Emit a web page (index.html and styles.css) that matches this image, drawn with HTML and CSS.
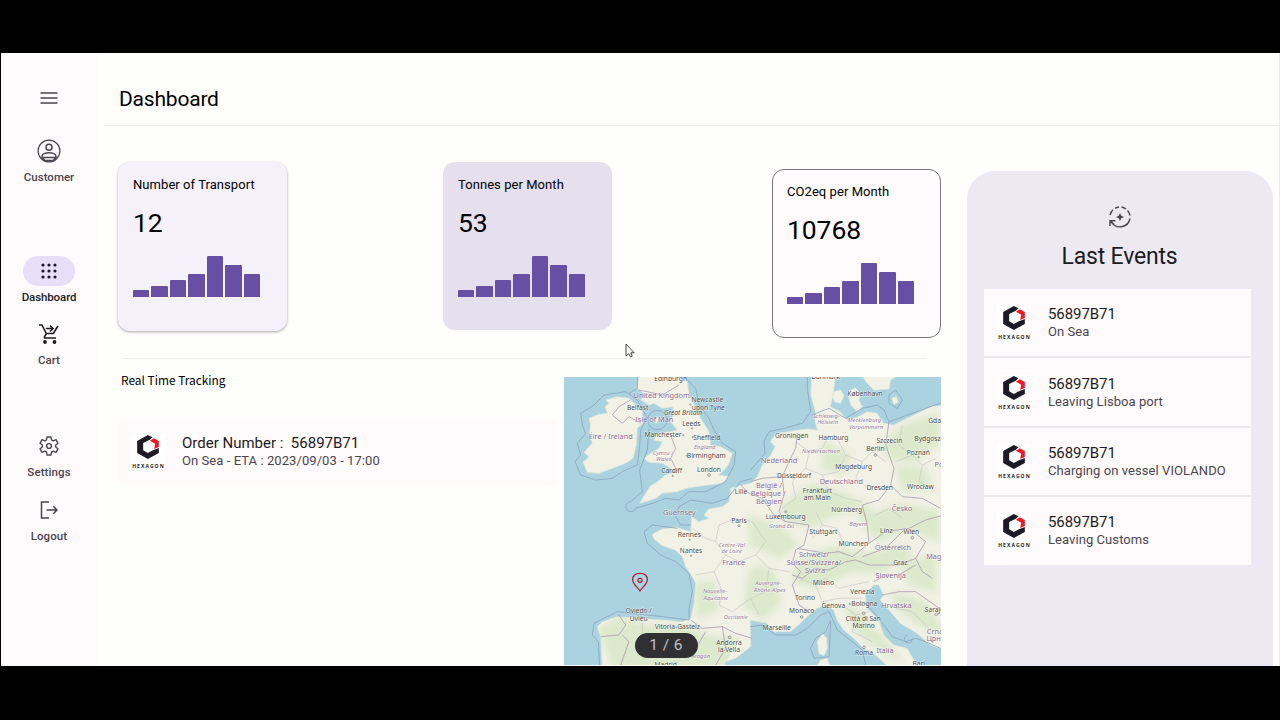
FILE: index.html
```html
<!DOCTYPE html>
<html lang="en">
<head>
<meta charset="utf-8">
<title>Dashboard</title>
<link rel="stylesheet" href="styles.css">
</head>
<body>
<svg class="defs" width="0" height="0" aria-hidden="true">
  <symbol id="hexagon" viewBox="0 0 65 72">
    <path fill="#1c1b25" d="M32 0 46 7 38 14 18 24V46L32 54 47 46 65 39V54L32 72 0 54V18Z"/>
    <path fill="#ed1c24" d="M50 10 65 18V36L51 42 54 26 38 17Z"/>
  </symbol>
  <symbol id="bars" viewBox="0 0 128 42">
    <g fill="#6750a4">
      <path d="M0 42v-6q0-1 1-1h14q1 0 1 1v6ZM18 42v-10q0-1 1-1h15q1 0 1 1v10ZM37 42v-16q0-1 1-1h14q1 0 1 1v16ZM55 42v-22q0-1 1-1h15q1 0 1 1v22ZM74 42v-40q0-1 1-1h14q1 0 1 1v40ZM92 42v-31q0-1 1-1h15q1 0 1 1v31ZM111 42v-22q0-1 1-1h14q1 0 1 1v22Z"/>
    </g>
  </symbol>
</svg>
<div class="app">
  <nav class="rail">
    <div class="menu"><svg width="18" height="12" viewBox="0 0 18 12"><path d="M.5 1h17M.5 6h17M.5 11h17" stroke="#49454f" stroke-width="1.7"/></svg></div>
    <div class="item"><span class="icon"><svg width="24" height="24" viewBox="0 0 24 24" fill="none" stroke="#49454f" stroke-width="1.2"><circle cx="12" cy="12" r="10.9"/><circle cx="12" cy="8.200" r="3" stroke-width="1.5"/><path d="M5 18.500v-1.500c0-2 3.500-3.300 7-3.300s7 1.300 7 3.300v1.500ZM5 18.500l3 3h8l3-3" stroke-width="1.5"/></svg></span><span class="label">Customer</span></div>
    <div class="item active"><span class="icon"><svg width="18" height="18" viewBox="0 0 18 18" fill="#1d192b"><circle cx="3" cy="3" r="1.6"/><circle cx="9" cy="3" r="1.6"/><circle cx="15" cy="3" r="1.6"/><circle cx="3" cy="9" r="1.6"/><circle cx="9" cy="9" r="1.6"/><circle cx="15" cy="9" r="1.6"/><circle cx="3" cy="15" r="1.6"/><circle cx="9" cy="15" r="1.6"/><circle cx="15" cy="15" r="1.6"/></svg></span><span class="label">Dashboard</span></div>
    <div class="item"><span class="icon"><svg width="20" height="20" viewBox="0 0 20 20" fill="none" stroke="#1c1b1f" stroke-width="1.6"><path d="M0 1h3l4.300 8.500h7L19 2M7.300 9.500 5.500 12.800q-.5 1.200.8 1.200H17M7 4.500h6.500M11 1.500l3 3-3 3"/><g fill="#1c1b1f" stroke="none"><circle cx="6" cy="18" r="1.900"/><circle cx="15.500" cy="18" r="1.900"/></g></svg></span><span class="label">Cart</span></div>
    <div class="item settings"><span class="icon"><svg width="20" height="20" viewBox="0 0 20 20" fill="none" stroke="#49454f" stroke-width="1.400"><path stroke-linejoin="round" d="M8 1h4l.5 2.800 1.700 1L17 3.700l2 3.600L16.700 9v2l2.300 1.700-2 3.600-2.800-1.100-1.700 1L12 19H8l-.5-2.800-1.700-1L3 16.300l-2-3.600L3.300 11V9L1 7.300l2-3.600 2.800 1.100 1.700-1Z"/><circle cx="10" cy="10" r="2.400"/></svg></span><span class="label">Settings</span></div>
    <div class="item"><span class="icon"><svg width="18" height="18" viewBox="0 0 18 18" fill="none" stroke="#49454f" stroke-width="1.500"><path d="M9 1H1.500v16H9M6.500 9H17M13.300 5.200 17 9l-3.700 3.800"/></svg></span><span class="label">Logout</span></div>
  </nav>
  <main class="main">
    <header class="header">Dashboard</header>
    <div class="content">
      <div class="left">
        <section class="cards">
          <article class="card elevated"><h3>Number of Transport</h3><strong>12</strong><svg width="128" height="42"><use href="#bars"/></svg></article>
          <article class="card filled"><h3>Tonnes per Month</h3><strong>53</strong><svg width="128" height="42"><use href="#bars"/></svg></article>
          <article class="card outlined"><h3>CO2eq per Month</h3><strong>10768</strong><svg width="128" height="42"><use href="#bars"/></svg></article>
        </section>
        <section class="tracking">
          <div class="orders">
            <h2>Real Time Tracking</h2>
            <div class="row order"><span class="logo"><svg width="22" height="24"><use href="#hexagon"/></svg><b>HEXAGON</b></span><div><p class="title">Order Number :&nbsp; 56897B71</p><p class="sub">On Sea - ETA : 2023/09/03 - 17:00</p></div></div>
          </div>
          <div class="map">
            <svg width="377" height="288" viewBox="5 6 1131 864" preserveAspectRatio="none">
              <rect x="0" y="0" width="1140" height="875" fill="#aad3df"/>
              <g fill="#f1f1e5" stroke="#dfe5d8" stroke-width="2">
                <path d="M130 75 165 65 200 70 215 85 240 110 240 145 225 160 222 210 212 250 190 265 150 280 110 295 75 292 62 262 80 245 65 232 90 205 80 180 85 150 80 130 110 118 135 115 128 95 140 85Z"/>
                <path d="M230 0 225 40 250 60 235 75 262 90 275 85 300 100 330 95 335 110 325 140 345 165 325 170 285 175 275 195 300 200 290 220 265 235 245 250 260 262 300 265 325 280 345 290 310 300 285 320 262 335 232 385 250 380 280 370 300 355 345 350 370 340 400 335 440 330 480 325 500 305 470 300 498 270 510 235 475 215 445 210 440 170 415 130 395 90 380 60 375 20 355 0Z"/>
                <path d="M748 0 745 60 755 95 760 115 758 140 765 165 735 162 700 166 670 172 640 175 625 200 638 215 625 240 600 270 585 305 565 325 540 330 505 340 500 380 480 395 440 402 425 420 440 430 410 440 388 425 385 470 340 457 300 462 270 478 275 492 300 512 340 526 360 545 370 575 390 605 400 625 395 685 385 730 360 740 300 735 230 730 165 725 120 740 105 755 115 785 120 880H480L490 860 520 850 565 815 564 735 614 745 634 770 684 770 714 745 734 725 764 700 794 690 814 705 824 735 844 765 874 790 904 820 939 840 984 880H1070L1034 820 994 810 964 780 949 735 914 700 909 660 934 630 949 630 964 660 954 675 984 710 1014 745 1064 775 1104 810 1145 825V90L1104 96 1044 125 994 150 964 145 944 115 914 110 884 127 854 135 834 110 804 95 812 60 820 0Z"/>
                <path d="M815 50 835 45 845 62 835 85 818 82 810 65ZM855 50 880 38 895 60 890 75 900 95 885 110 865 90ZM900 0 1010 0 985 15 980 42 935 46 910 20ZM988 70 1002 65 1008 82 995 88ZM765 800 780 775 793 790 795 820 785 842 770 835ZM760 880 775 855 795 850 805 880ZM275 138 287 125 292 132 282 145Z"/>
              </g>
              <clipPath id="land"><path d="M270 478 385 470 440 402 505 340 625 240 640 175 765 165 748 0H820L834 110 884 127 964 145 1145 90V825L1014 745 934 630 909 660 949 735 1050 880H984L844 765 794 690 684 770 564 735 480 880H120L105 755 165 725 385 730 400 625 340 526Z"/></clipPath>
              <g clip-path="url(#land)">
                <g class="terrain">
                  <path d="M560 585q40-30 80 10l15 90-55 50-55-40ZM650 395l100-70 100 30 55 40-70 20-90 40-65-10ZM950 210l70-60 110-35v90l-80 60-70-15ZM880 370l60 40 80-25 110 25v90l-90-35-90 35-55-60ZM700 560l100-45 120 20 110-30 20 40-100 50-80-5-110 50-70-15ZM840 690l55 20 70 80 60 70-60-20-80-65ZM990 650l100 30 60 100-70-20-80-60ZM110 755l60-30 90 25 120 0 50 30 100 10 30 35-80 55H150ZM400 620l60 0 5 90-60 20ZM780 200l90 40-30 60-60-20ZM560 420l90 30 60 60-60 40-90-40ZM1000 270l90 10 20 60-90 10ZM1010 560l110-20v110l-80-20Z"/>
                </g>
              </g>
              <g class="borders">
                <path d="M125 60 95 90 55 115 60 150 70 175 45 205 55 240 38 260 55 300 100 315 150 310 180 290 225 270 232 215 235 165 255 130 225 75 190 50Z"/>
                <circle cx="285" cy="135" r="29"/>
                <path d="M225 0V40L200 55M360 0 400 40 410 90 440 130 455 165 480 205 520 230 515 270 490 320 430 350 380 350 350 375 310 370 270 385 220 400A15 15 0 1 1 205 380L240 350 232 285 255 225 260 160M570 310 535 320 495 370 450 385 385 375 350 395 340 425 355 450 385 450"/>
                <path d="M735 0V40L745 110 720 145 665 160 620 170 605 200 608 235 565 285M748 120 800 100 850 130 900 100 945 90 965 105 980 140 1050 115 1145 80M980 60 1000 45 1020 75 1005 100 980 85ZM345 460 270 450 245 470 255 505 295 540 340 560 380 595 390 650 380 700V735L300 725 165 710 95 745 90 780 108 800 112 870M564 755 600 750 640 780 700 780 735 760 775 720 800 710 825 765 870 800 900 825 910 870M905 680 950 730 990 785 1030 800 1060 790 1090 800 1145 825M805 735 790 770 760 790 745 820 755 850 800 845 805 740M1035 780a12 12 0 1 0 15 12"/>
                <path class="land-border" d="M150 120 170 95 205 75M150 120 180 145 200 125 235 145M325 180 340 220 325 250 345 290M230 45 300 60 350 30M535 330 560 355 600 370 635 420 670 440 740 450 725 510 700 525 690 565 715 590 690 630 710 690 740 710M565 320 600 310 660 305 680 260 700 220 705 175M660 305 665 360 650 410 670 440M705 520 790 535 830 530 870 545 920 505 915 450 900 390 950 375 985 330 995 280 970 210 980 140M985 330 1020 365 1080 370 1135 400M920 505 970 470 1040 460 1090 500 1060 550 1010 570 920 570 880 555 850 560 800 585 760 580 720 610 690 600M900 545 970 520 1030 460M1040 460 1090 435 1145 420M1060 550 1080 590 1110 610M935 620 970 600 1010 600 1060 570M960 660 1010 650 1060 650 1145 710M170 720 190 750 170 780 115 785M180 780 200 800 175 870M385 735 420 760 480 755 520 775 570 790M430 770 400 820 350 850M480 755 490 820 460 870"/>
                <path class="region" d="M390 460 430 490 460 500 490 540 455 590 400 600M455 590 480 650 470 690 510 710 565 670M490 540 530 560 580 540 610 500 570 440 520 430 470 450 460 500M580 540 620 580 610 650 565 670 590 720M620 580 680 590M700 200 740 230 780 220 800 180M740 230 730 280 780 300 830 290 850 240 820 180M780 300 800 350 850 370 900 380M730 280 690 320 700 370 660 400M850 240 900 260 930 230 970 260M900 260 880 310 930 350M760 410 780 450 825 460 840 500 820 530M780 450 750 490M1000 260 1050 240 1080 270 1120 250M1020 150 1010 210 1050 240M1080 270 1070 320 1120 350M940 420 980 400 1020 430M710 610 760 630 790 610 830 640 870 630 920 620M760 630 780 680 830 670 900 670M840 690 880 720 870 770 930 800M880 720 920 710M1000 700 1050 710 1100 760M240 740V780L300 790 330 850"/>
              </g>
              <g class="labels">
                <g class="city">
                  <text x="325" y="19">Edinburgh</text><text x="226" y="104">Belfast</text><text x="435" y="82">Newcastle</text><text x="438" y="104">upon Tyne</text><text x="387" y="154">Leeds</text><text x="302" y="187">Manchester</text><text x="434" y="194">Sheffield</text><text x="432" y="248">Birmingham</text><text x="328" y="295">Cardiff</text><text x="440" y="290">London</text><text x="536" y="356">Lille</text><text x="530" y="443">Paris</text>
                  <text x="381" y="486">Rennes</text><text x="386" y="535">Nantes</text><text x="229" y="714">Oviedo /</text><text x="229" y="737">Uviéu</text><text x="345" y="762">Vitoria-Gasteiz</text><text x="500" y="810">Andorra</text><text x="500" y="832">la Vella</text><text x="310" y="877">Madrid</text>
                  <text x="790" y="12">Danmark</text><text x="908" y="63">København</text><text x="688" y="189">Groningen</text><text x="813" y="196">Hamburg</text><text x="981" y="204">Szczecin</text><text x="939" y="229">Berlin</text><text x="1105" y="197">Bydgoszcz</text><text x="1133" y="145">Gdańsk</text><text x="1068" y="239">Poznań</text><text x="874" y="283">Magdeburg</text><text x="695" y="309">Düsseldorf</text><text x="765" y="353">Frankfurt</text><text x="765" y="374">am Main</text><text x="952" y="346">Dresden</text><text x="1074" y="342">Wrocław</text><text x="853" y="412">Nürnberg</text><text x="670" y="433">Luxembourg</text>
                  <text x="783" y="476">Stuttgart</text><text x="873" y="512">München</text><text x="972" y="474">Linz</text><text x="1047" y="478">Wien</text><text x="1014" y="570">Graz</text><text x="783" y="629">Milano</text><text x="900" y="656">Venezia</text><text x="728" y="675">Torino</text><text x="813" y="698">Genova</text><text x="906" y="693">Bologna</text><text x="718" y="715">Monaco</text><text x="643" y="766">Marseille</text><text x="903" y="738">Città di San</text><text x="904" y="760">Marino</text><text x="905" y="840">Roma</text><text x="1127" y="710">Sarajevo</text><text x="1069" y="872">Bari</text>
                  <text x="362" y="121" font-style="italic">Great Britain</text>
                </g>
                <g class="country">
                  <text x="298" y="68">United Kingdom</text><text x="145" y="193">Éire / Ireland</text><text x="276" y="142">Isle of Man</text><text x="351" y="419">Guernsey</text><text x="514" y="570">France</text><text x="650" y="263">Nederland</text><text x="620" y="340">België /</text><text x="618" y="364">Belgique /</text><text x="620" y="388">Belgien</text><text x="837" y="326">Deutschland</text><text x="1019" y="407">Česko</text><text x="1150" y="275">Polska</text><text x="992" y="525">Österreich</text><text x="755" y="547">Schweiz/</text><text x="755" y="570">Suisse/Svizzera/</text><text x="758" y="595">Svizra</text><text x="1140" y="553">Magyaro.</text><text x="985" y="608">Slovenija</text><text x="1002" y="700">Hrvatska</text><text x="968" y="834">Italia</text><text x="1118" y="776">Crna</text><text x="1120" y="799">Црна</text>
                </g>
                <g class="province">
                  <text x="427" y="221">England</text><text x="302" y="240">Cymru /</text><text x="304" y="257">Wales</text><text x="792" y="130">Schleswig-</text><text x="796" y="148">Holstein</text><text x="909" y="142">Mecklenburg-</text><text x="911" y="161">Vorpommern</text><text x="776" y="235">Niedersachsen</text><text x="658" y="460">Grand Est</text><text x="888" y="453">Bayern</text><text x="508" y="515">Centre-Val</text><text x="508" y="533">de Loire</text><text x="458" y="655">Nouvelle-</text><text x="460" y="674">Aquitaine</text><text x="520" y="732">Occitanie</text><text x="618" y="631">Auvergne-</text><text x="622" y="651">Rhône-Alpes</text><text x="415" y="848">Aragón</text>
                </g>
              </g>
              <g fill="none" stroke="#7a7a78" stroke-width="2"><circle cx="384" cy="88" r="2"/><circle cx="389" cy="160" r="2"/><circle cx="363" cy="181" r="2"/><circle cx="391" cy="186" r="2"/><circle cx="374" cy="242" r="2"/><circle cx="331" cy="303" r="2"/><circle cx="440" cy="300" r="4"/><circle cx="530" cy="452" r="3"/><circle cx="939" cy="240" r="4"/><circle cx="1069" cy="246" r="2"/><circle cx="670" cy="410" r="3"/><circle cx="386" cy="542" r="2"/><circle cx="382" cy="494" r="2"/><circle cx="502" cy="787" r="4"/><circle cx="718" cy="726" r="4"/><circle cx="1050" cy="488" r="4"/><circle cx="862" cy="687" r="2"/><circle cx="904" cy="715" r="4"/><circle cx="905" cy="817" r="4"/><circle cx="1122" cy="718" r="4"/></g>
              <g fill="none" stroke="#b3152c" stroke-width="3.500"><path d="M233 648C225 635 211 628 211 614C211 602 220 595 233 595C246 595 255 602 255 614C255 628 241 635 233 648Z"/><circle cx="233" cy="616" r="6"/></g>
            </svg>
            <span class="pager">1 / 6</span>
          </div>
        </section>
      </div>
      <aside class="events">
        <svg class="sync" width="22" height="22" viewBox="0 0 22 22" fill="none" stroke="#49454f" stroke-width="1.400"><path d="M1 9A10 10 0 0 1 4 3.800M6 2.300A10 10 0 0 1 10 1M12.500 1A10 10 0 0 1 17 3M18.500 4.600A10 10 0 0 1 21 9.500M21 12.500A10.200 10.200 0 0 1 2 15.500M1 20V14.800H6.500M1.500 15 5 18.500"/><path fill="#49454f" stroke="none" d="M11 7 12.300 9.700 15 11 12.300 12.300 11 15 9.700 12.300 7 11 9.700 9.700Z"/></svg>
        <h2>Last Events</h2>
        <div class="list">
          <div class="row"><span class="logo"><svg width="22" height="24"><use href="#hexagon"/></svg><b>HEXAGON</b></span><div><p class="title">56897B71</p><p class="sub">On Sea</p></div></div>
          <div class="row"><span class="logo"><svg width="22" height="24"><use href="#hexagon"/></svg><b>HEXAGON</b></span><div><p class="title">56897B71</p><p class="sub">Leaving Lisboa port</p></div></div>
          <div class="row"><span class="logo"><svg width="22" height="24"><use href="#hexagon"/></svg><b>HEXAGON</b></span><div><p class="title">56897B71</p><p class="sub">Charging on vessel VIOLANDO</p></div></div>
          <div class="row"><span class="logo"><svg width="22" height="24"><use href="#hexagon"/></svg><b>HEXAGON</b></span><div><p class="title">56897B71</p><p class="sub">Leaving Customs</p></div></div>
        </div>
      </aside>
    </div>
  </main>
  <svg class="cursor" width="10" height="15" viewBox="0 0 10 15"><path d="M1 1V13L3.700 10.500 5.500 14 7.300 13.200 5.800 9.800H9.200Z" fill="#fff" stroke="#333" stroke-width=".9"/></svg>
</div>
</body>
</html>
```
FILE: styles.css
```css
* { box-sizing: border-box; }
body { margin: 0; padding: 53px 0 0 1px; height: 720px; overflow: hidden; background: #000; font-family: Roboto, "Liberation Sans", sans-serif; color: #000; }
h2, h3, p { margin: 0; font-weight: 400; }
svg { display: block; flex: none; }
.defs { position: absolute; }
.app { display: flex; width: 1279px; height: 612.5px; background: #fefefd; overflow: hidden; border-right: 1px solid #ececec; }

.rail { flex: none; width: 96px; background: #fffbfc; display: flex; flex-direction: column; align-items: center; padding-top: 39px; }
.menu { height: 43.5px; }
.item { height: 48px; display: flex; flex-direction: column; align-items: center; gap: 3px; }
.item .icon { width: 52px; height: 30px; flex: none; display: flex; align-items: center; justify-content: center; border-radius: 15px; }
.item .label { font-size: 11.5px; font-weight: 500; line-height: 16px; letter-spacing: 0; color: #49454f; }
.item.active { margin-top: 72px; margin-bottom: 15px; }
.item.active .icon { background: #e8def8; }
.item.active .label { color: #1c1b1f; letter-spacing: -.1px; }
.item.settings { margin: 64.5px 0 16px; }
.item.settings .label, .item.settings + .item .label { letter-spacing: .1px; }

.main { flex: 1; min-width: 0; }
.header { margin-left: 7px; padding-left: 15px; height: 73px; padding-top: 32px; font-size: 21px; line-height: 28px; letter-spacing: -.2px; border-bottom: 1px solid #efeef0; }
.content { display: grid; grid-template-columns: 823px 306px; column-gap: 26px; padding-left: 21px; height: 540px; }
.cards { display: flex; justify-content: space-between; align-items: flex-start; padding-top: 36px; height: 232px; }
.card { width: 169px; height: 169px; border-radius: 12px; padding: 13px 15px; }
.card h3 { font-size: 13px; line-height: 20px; letter-spacing: .06px; white-space: nowrap; }
.card strong { display: block; font-weight: 400; font-size: 26.5px; line-height: 34px; margin: 11px 0 15px; letter-spacing: -.1px; }
.elevated { background: #f5f1fb; box-shadow: 0 1px 3px rgba(0,0,0,.35); height: 168.5px; }
.filled { background: #e6dfed; height: 168px; margin-left: -4px; }
.outlined { background: #fffbfc; border: 1px solid #79747e; margin-top: 7px; padding: 12.4px 14px; }

.tracking { display: grid; grid-template-columns: 440px 377px; column-gap: 5.6px; height: 308px; }
.orders h2 { margin: 0 -369px 0 5px; padding-top: 11px; height: 60px; font: 400 11.900px/20px "Noto Sans CJK SC", "Noto Sans", sans-serif; border-top: 1px solid #ebeaee; text-indent: -2px; }
.row { display: flex; align-items: center; padding-left: 13px; height: 69.3px; background: #fffbfc; }
.order { height: 67px; border-radius: 8px; }
.order .title { letter-spacing: 0; }
.logo { width: 34px; height: 36px; background: #fff; display: flex; flex-direction: column; align-items: center; justify-content: space-between; padding-top: 1px; margin-right: 17px; }
.logo b { font: 700 5px/7px "Noto Sans", sans-serif; letter-spacing: 1.1px; margin-right: -1px; color: #1c1b1f; }
.title { font-size: 15px; line-height: 18px; color: #1c1b1f; letter-spacing: -.07px; white-space: nowrap; }
.sub { font-size: 13px; line-height: 18px; color: #49454f; letter-spacing: .07px; white-space: nowrap; }
.map { position: relative; margin-top: 19px; height: 289px; }
.pager { position: absolute; left: 71px; top: 256px; width: 63px; height: 25px; border-radius: 13px; background: #303033; color: #c0c0c2; font-size: 15.500px; line-height: 25px; text-align: center; letter-spacing: .4px; }

.terrain { fill: #d5e6c3; opacity: .75; filter: blur(10px); }
.borders { fill: none; stroke: #8fa4c0; stroke-width: 2.500; }
.land-border { stroke: #b09bb3; }
.region { stroke: #cbc0cb; stroke-width: 1.800; }
.labels { font-family: "Noto Sans", sans-serif; font-size: 20px; text-anchor: middle; paint-order: stroke; stroke: rgba(255,255,255,.6); stroke-width: 3px; }
.city { fill: #4c4c4c; }
.country { fill: #8b6a90; font-size: 22px; }
.province { fill: #9b7f9f; font-size: 17.500px; font-style: italic; }

.events { margin-top: 45px; background: #ece9f3; border-radius: 28px 28px 0 0; padding: 35px 22px 0 17px; height: 500px; }
.sync { margin: 0 auto; position: relative; left: 2px; }
.events h2 { margin: 14px 0 17px; text-align: center; font-size: 23px; line-height: 30px; color: #1c1b1f; text-indent: 4px; letter-spacing: -.18px; }
.list .row { border-bottom: 2px solid #ebe8ed; padding-top: 1.500px; }
.list .row:last-child { height: 68px; border-bottom: 0; padding-top: 0; }
.cursor { position: absolute; left: 625px; top: 343px; }
```
